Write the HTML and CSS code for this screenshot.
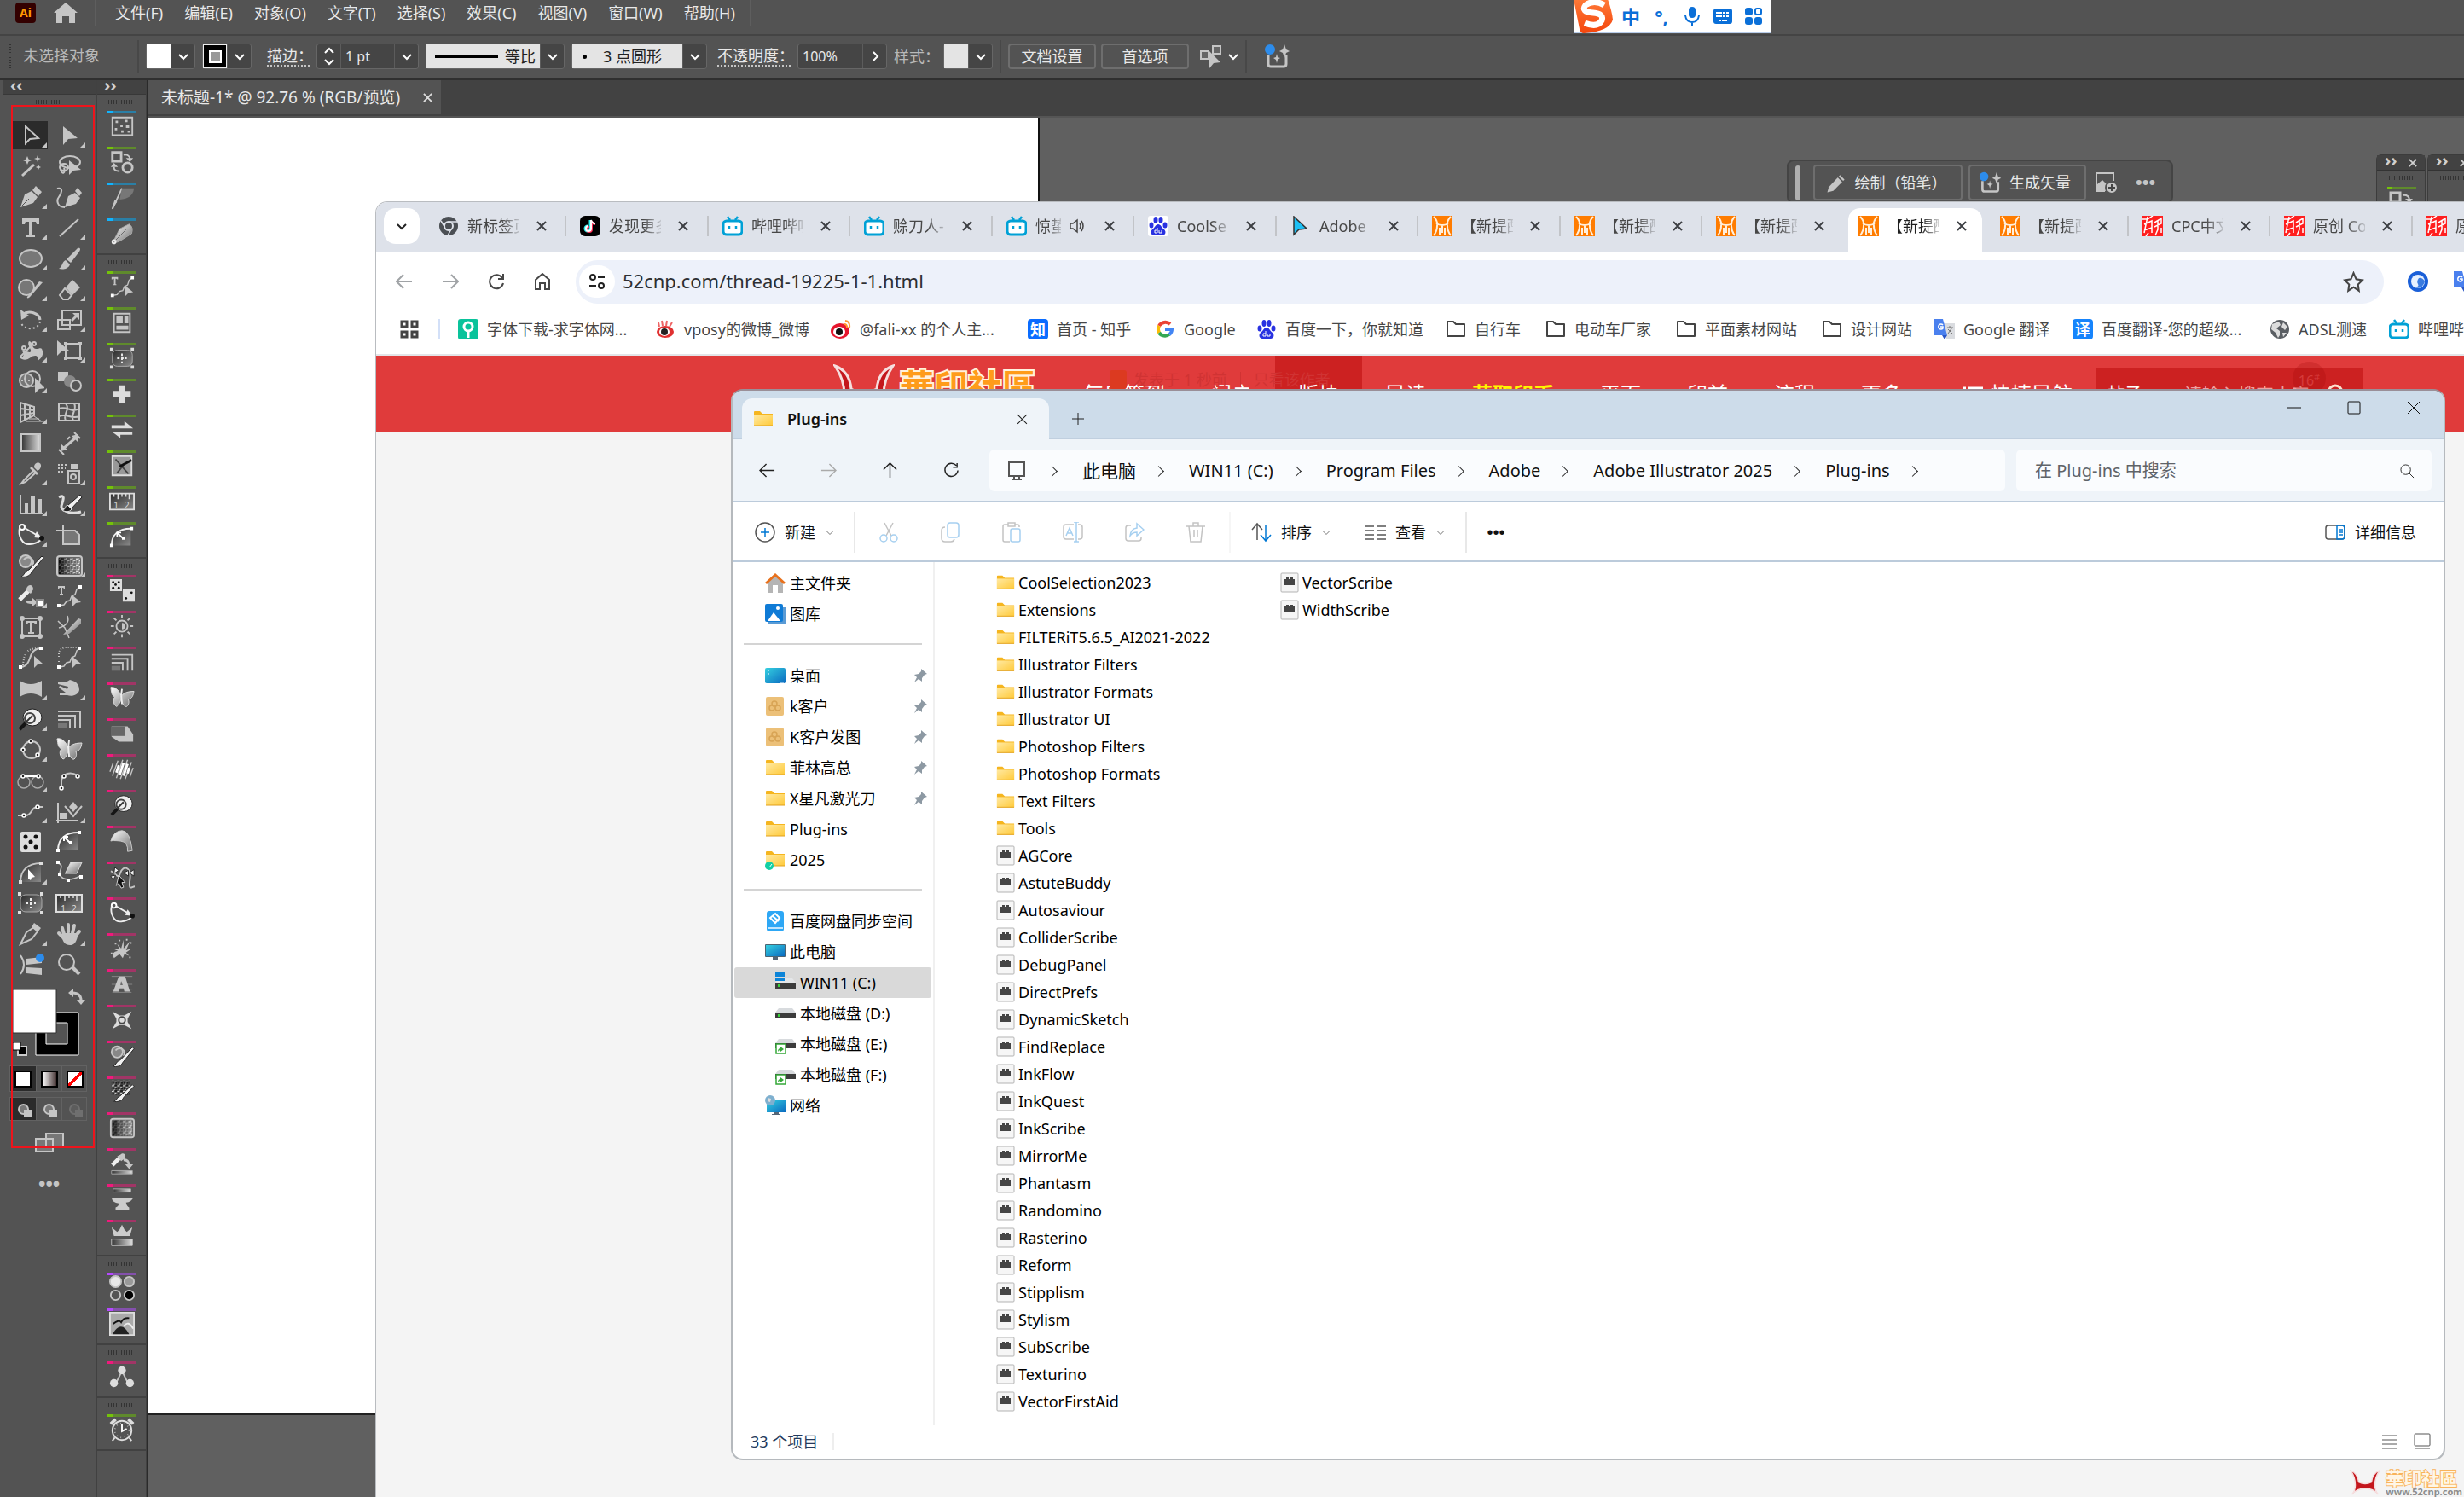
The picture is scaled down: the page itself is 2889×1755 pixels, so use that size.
FILE: index.html
```html
<!DOCTYPE html>
<html lang="zh-CN">
<head>
<meta charset="utf-8">
<title>未标题-1* @ 92.76 % (RGB/预览)</title>
<link rel="stylesheet" href="styles.css">
</head>
<body>
<svg class="defs" aria-hidden="true">
<defs>
<linearGradient id="lg"><stop offset="0" stop-color="#333"/><stop offset="1" stop-color="#ddd"/></linearGradient>
<linearGradient id="dg" x2="1" y2="1"><stop offset="0" stop-color="#2a2a2a"/><stop offset="1" stop-color="#8a8a8a"/></linearGradient>
<linearGradient id="sg" x2="1" y2="1"><stop offset="0" stop-color="#fff"/><stop offset="1" stop-color="#6a6a6a"/></linearGradient>
<linearGradient id="fy" x2="1" y2="1"><stop offset="0" stop-color="#ffe9a2"/><stop offset="1" stop-color="#ffca3a"/></linearGradient>
<linearGradient id="bl" x2="1" y2="1"><stop offset="0" stop-color="#35d0e0"/><stop offset="1" stop-color="#0a6ac0"/></linearGradient>
<linearGradient id="rb" x2="0" y2="1"><stop offset="0" stop-color="#ff7a38"/><stop offset="1" stop-color="#f4450c"/></linearGradient>
<linearGradient id="shade"><stop offset="0" stop-color="#000" stop-opacity=".75"/><stop offset="1" stop-color="#fff" stop-opacity=".4"/></linearGradient>
<pattern id="noise" width="7" height="7" patternUnits="userSpaceOnUse"><path d="M0 0h3v2H0zM4 3h2v3H4zM1 4h2v2H1z" fill="#1c1c1c"/><path d="M3 1h2v1H3zM6 6h1v1H6zM0 3h2v1H0zM5 0h1v2H5z" fill="#ddd"/></pattern>
</defs>
<symbol id="chev" viewBox="0 0 12 12"><path d="M1 4l5 5 5-5"/></symbol>
<symbol id="x" viewBox="0 0 12 12"><path d="M1 1l10 10M11 1L1 11"/></symbol>
<symbol id="sel" viewBox="0 0 32 32"><path d="M10 5v20l5-5 10-1z"/></symbol>
<symbol id="dsel" viewBox="0 0 32 32"><path class="f" d="M9 5v22l6-7 11-1z"/></symbol>
<symbol id="wand" viewBox="0 0 32 32"><path d="M6 27l14-13" stroke-width="3"/><path class="f" d="M12 4l1.500 3.500L17 9l-3.500 1.500L12 14l-1.500-3.500L7 9l3.500-1.500zM24 3l1 3 3 1-3 1-1 3-1-3-3-1 3-1zM25 14l1 2 2 1-2 1-1 2-1-2-2-1 2-1z"/></symbol>
<symbol id="lasso" viewBox="0 0 32 32"><ellipse cx="17" cy="11" rx="12" ry="7"/><ellipse cx="10" cy="17" rx="5" ry="4"/><path d="M6 20c2 6 6 4 4-2"/><path class="f" d="M16 9v17l5-5 9-1z"/></symbol>
<symbol id="pen" viewBox="0 0 32 32"><path class="f" d="M4 28l5-15 8-4 7 7-5 7zM18 8l4-5 7 7-4 5z"/><path d="M5 27l9-9" stroke="#535353" stroke-width="1"/></symbol>
<symbol id="curv" viewBox="0 0 32 32"><path class="f" d="M11 28l4-13 8-4 6 6-5 7zM23 9l3-4 5 6-3 4z"/><path d="M2 6c8-2 5 6 2 10s-2 12 7 12"/></symbol>
<symbol id="type" viewBox="0 0 32 32"><path class="f" d="M6 5h20v7h-3l-1-3h-4v15h3v3H11v-3h3V9h-4l-1 3H6z"/></symbol>
<symbol id="line" viewBox="0 0 32 32"><path d="M5 26L27 6"/></symbol>
<symbol id="ell" viewBox="0 0 32 32"><ellipse cx="16" cy="16" rx="13" ry="10" fill="#777"/></symbol>
<symbol id="brush" viewBox="0 0 32 32"><path class="f" d="M13 17L26 4c3-1 4 1 2 4L18 21zM12 18l5 5c-2 6-9 6-13 5 4-2 4-9 8-10z"/></symbol>
<symbol id="blob" viewBox="0 0 32 32"><ellipse cx="11" cy="14" rx="9" ry="9" fill="#777"/><path d="M30 8L16 24c-2 3-5 3-4 1l14-18z" class="f"/></symbol>
<symbol id="eraser" viewBox="0 0 32 32"><path class="f" d="M12 14L20 5l9 9-9 9z"/><path d="M11 15l8 8-4 5H9l-4-5z"/></symbol>
<symbol id="rot" viewBox="0 0 32 32"><path d="M6 10c8-6 20-2 21 6" stroke-width="3"/><path class="f" d="M4 4l1 12 9-5z"/><path d="M27 18c-2 10-18 11-22 2" stroke-dasharray="2 3"/></symbol>
<symbol id="scale" viewBox="0 0 32 32"><path d="M8 5h22v17H8zM3 16h14v11H3z"/><path class="f" d="M20 8h8v8l-3-3-5 5-2-2 5-5z"/></symbol>
<symbol id="warp" viewBox="0 0 32 32"><path class="f" d="M14 5c5 0 3 9 8 9s7-3 8 3-3 9-6 11c2-7-4-7-8-4S7 28 3 24c5 1 6-5 3-7 5-2 9 3 10 0s-5-8-2-12z"/><path d="M4 23L19 8"/><circle cx="8" cy="13" r="2"/><circle cx="20" cy="8" r="2"/></symbol>
<symbol id="ftrans" viewBox="0 0 32 32"><path d="M12 8h17v17H12z"/><path class="f" d="M2 4v18l5-5 9-1zM10 6h4v4h-4zM27 6h4v4h-4zM27 23h4v4h-4zM10 23h4v4h-4z"/></symbol>
<symbol id="shapeb" viewBox="0 0 32 32"><circle cx="11" cy="15" r="8" fill="#777"/><circle cx="18" cy="13" r="9"/><path d="M5 15h14" stroke-dasharray="2 2"/><path class="f" d="M21 12v18l5-5 7-1z"/></symbol>
<symbol id="blend" viewBox="0 0 32 32"><path class="f" d="M3 5h12v11H3z"/><circle cx="17" cy="16" r="7" fill="#888" stroke="none"/><ellipse cx="24" cy="21" rx="6" ry="6" fill="#555"/></symbol>
<symbol id="persp" viewBox="0 0 32 32"><path d="M4 5v23l16-8V10zM4 12l16 2M4 20l16-3M9 7v19M15 8v14"/><path d="M20 21l9 6M10 27h20M14 24h12" stroke-width="1"/></symbol>
<symbol id="mesh" viewBox="0 0 32 32"><path d="M4 6h24v20H4zM12 6c6 8-4 12 0 20M22 6c4 8-5 12-1 20M4 12c10-4 14 6 24 0M4 21c10-4 14 4 24 0"/></symbol>
<symbol id="grad" viewBox="0 0 32 32"><path d="M5 6h22v20H5z" fill="url(#lg)"/></symbol>
<symbol id="meas" viewBox="0 0 32 32"><path d="M9 23L24 10" stroke-width="3"/><path class="f" d="M6 26v-9l8 7zM27 6v10l-8-8z"/><path d="M4 24l6 6M22 4l7 7M14 12l3-3"/></symbol>
<symbol id="dropper" viewBox="0 0 32 32"><path d="M20 12L8 24l-3 4 5-2 12-11"/><path class="f" d="M17 8l8 8-2 2-8-8zM20 9c0-7 9-7 8-1-1 4-3 4-4 5z"/></symbol>
<symbol id="spray" viewBox="0 0 32 32"><path d="M15 13h13v15H15z"/><circle cx="21" cy="20" r="3"/><path class="f" d="M18 5h8v6h-8z"/><path d="M3 6h12M3 10h9M3 14h6" stroke-dasharray="2 2"/></symbol>
<symbol id="graph" viewBox="0 0 32 32"><path d="M4 5v22h26"/><path class="f" d="M9 15h4v11H9zM16 7h5v19h-5zM24 10h5v16h-5z"/></symbol>
<symbol id="inkb" viewBox="0 0 32 32"><path d="M4 8c9-5 4 6 3 10s8 11 23 7" stroke="#ddd" stroke-width="3"/><path d="M14 18L29 5l2 3-13 14z" fill="#f0f0f0" stroke="#222" stroke-width="1"/><path d="M14 17l5 5c-3 4-8 3-11 1 4 0 3-5 6-6z" fill="#222" stroke="#ddd" stroke-width="1"/></symbol>
<symbol id="scribe" viewBox="0 0 32 32"><circle cx="6" cy="7" r="3" stroke="#fff"/><path d="M3 8c-2 9 3 20 12 19s10-3 14-6" stroke="#eee" stroke-width="2"/><path d="M9 8l17 10" stroke="#eee"/><path d="M23 12l6 8-9-1z" fill="#eee" stroke="none"/><circle cx="29" cy="20" r="3" fill="#111" stroke="none"/></symbol>
<symbol id="artb" viewBox="0 0 32 32"><path d="M9 11h14l5 5v11H9z" fill="#777"/><path d="M9 4v6M1 11h7"/></symbol>
<symbol id="blobb" viewBox="0 0 32 32"><circle cx="10" cy="11" r="7" fill="#888"/><path d="M8 9a6 6 0 0 1 10 7"/><path d="M14 21L29 5l2 2-14 17c-2 5-9 6-12 5 4-2 4-7 9-8z" fill="#f0f0f0" stroke="#222" stroke-width="1"/></symbol>
<symbol id="tex" viewBox="0 0 32 32"><rect x="2" y="5" width="29" height="23" rx="3" fill="#666"/><path d="M4 7h25v19H4z" fill="url(#noise)" stroke="none"/><path d="M4 7h25v19H4z" fill="url(#shade)" stroke="none"/></symbol>
<symbol id="eyeap" viewBox="0 0 32 32"><path d="M3 20L15 8" stroke="#eee" stroke-width="5"/><path class="f" d="M11 7c2-6 8-5 8 1l-3 5-6-5zM10 21h8v-3l6 5-6 5v-3c-5 0-8-1-8-4z"/><path d="M23 20h8v8h-8z" fill="#fff" stroke="#888"/></symbol>
<symbol id="tpath" viewBox="0 0 32 32"><path d="M5 27l5-1 3-4 4-1 2-5 4-2 2-6 4-3" stroke-width="1.500"/><path d="M2 25h4v4H2zM27 3h4v4h-4z" fill="#fff" stroke="none"/><path class="f" d="M3 4h8v3h-1l-1-1H8v7h1v1H5v-1h1V6H5L4 7H3zM20 15v13l4-4 6-1z"/></symbol>
<symbol id="tframe" viewBox="0 0 32 32"><path d="M6 6h21v21H6z"/><path class="f" d="M10 9h13v4h-2l-1-2h-2v11h2v2h-7v-2h2V11h-2l-1 2h-2z"/><g class="f"><circle cx="6" cy="6" r="3"/><circle cx="27" cy="6" r="3"/><circle cx="6" cy="27" r="3"/><circle cx="27" cy="27" r="3"/></g></symbol>
<symbol id="knife" viewBox="0 0 32 32"><path d="M3 9l8 8 5 12M14 3c3 7-2 12-10 14" stroke-width="1.500"/><path d="M9 25L27 6l3 1v5L16 24z" fill="url(#sg)" stroke="none"/></symbol>
<symbol id="curve1" viewBox="0 0 32 32"><path d="M5 27c14-2 6-20 22-22"/><path d="M7 25C8 10 12 5 25 5" stroke-dasharray="1 2"/><path d="M2 25h4v4H2zM26 3h4v4h-4z" fill="#fff" stroke="none"/><path class="f" d="M20 14v14l4-4 6-1z"/></symbol>
<symbol id="curve2" viewBox="0 0 32 32"><path d="M5 27l5-1 3-4 4-1 2-5 4-2 2-6 4-3" stroke-width="1.500"/><path d="M4 24V12q0-7 8-8h14" stroke-dasharray="1 2"/><path d="M2 25h4v4H2zM26 3h4v4h-4z" fill="#fff" stroke="none"/><path class="f" d="M20 15v13l4-4 6-1z"/></symbol>
<symbol id="env" viewBox="0 0 32 32"><path class="f" d="M3 7q13 8 26 0v19q-13-8-26 0z"/></symbol>
<symbol id="handw" viewBox="0 0 32 32"><path class="f" d="M3 9h9l5-3c9 2 11 7 11 12-1 6-9 8-14 6l-9 0v-2l7-1-8-6 1-2 9 4 1-3-12-3z"/></symbol>
<symbol id="lens" viewBox="0 0 32 32"><path d="M11 20l-8 8" stroke="#151515" stroke-width="4"/><ellipse cx="18" cy="14" rx="11" ry="10" fill="#eee" stroke="#222" stroke-width="1"/><ellipse cx="15" cy="15" rx="6" ry="6" stroke="#444" stroke-width="2"/><path d="M10 20l8-8" stroke="#333"/></symbol>
<symbol id="corner" viewBox="0 0 32 32"><path d="M3 7h26v20M3 12h20v15M3 17h14v10"/><path d="M3 21h11v6H3z" fill="#777" stroke="none"/></symbol>
<symbol id="circn" viewBox="0 0 32 32"><circle cx="17" cy="16" r="10"/><g fill="#222" stroke="#fff" stroke-width="1.500"><circle cx="16" cy="6" r="2"/><circle cx="7" cy="16" r="2"/><circle cx="24" cy="22" r="2"/></g></symbol>
<symbol id="bfly" viewBox="0 0 32 32"><path d="M15 14C12 5 6 2 2 3c1 7 1 10 5 12-3 3-2 9 2 12 3-1 5-6 6-10 1 6 4 11 7 10 3-3 3-6 2-9 5-1 6-5 7-10-6 0-12 1-16 6z" fill="url(#sg)" stroke="#ddd" stroke-width="1"/><path d="M15 12l1 12M15 13l1-8" stroke="#eee"/></symbol>
<symbol id="twoc" viewBox="0 0 32 32"><g stroke="#aaa" stroke-width="1.500"><circle cx="8" cy="18" r="7"/><circle cx="24" cy="18" r="7"/></g><path d="M7 11h18" stroke="#fff"/><g fill="#222" stroke="#fff" stroke-width="1.500"><circle cx="7" cy="11" r="2"/><circle cx="25" cy="11" r="2"/></g></symbol>
<symbol id="arcn" viewBox="0 0 32 32"><path d="M7 25V18c0-12 12-12 19-8"/><g fill="#222" stroke="#fff" stroke-width="1.500"><circle cx="7" cy="25" r="2"/><circle cx="10" cy="11" r="2"/><circle cx="26" cy="11" r="2"/></g></symbol>
<symbol id="scurv" viewBox="0 0 32 32"><path d="M1 21h9c8 0 6-10 14-10h7"/><g fill="#222" stroke="#fff" stroke-width="1.500"><circle cx="8" cy="21" r="2"/><circle cx="24" cy="11" r="2"/></g></symbol>
<symbol id="shapes" viewBox="0 0 32 32"><path d="M3 6v24M1 27h26M11 10l10 12L31 10"/><path class="f" d="M5 18h8v7H5zM21 5l5 6-5 6-5-6z"/></symbol>
<symbol id="dice" viewBox="0 0 32 32"><rect x="4" y="4" width="24" height="24" rx="2" fill="#ddd" stroke="none"/><g fill="#111" stroke="none"><circle cx="10" cy="10" r="2.500"/><circle cx="22" cy="10" r="2.500"/><circle cx="16" cy="16" r="2.500"/><circle cx="10" cy="22" r="2.500"/><circle cx="22" cy="22" r="2.500"/></g></symbol>
<symbol id="dync" viewBox="0 0 32 32"><path d="M3 26C3 12 12 5 27 5v21z" fill="url(#dg)" stroke="none"/><path d="M3 26C3 12 12 5 27 5" stroke="#eee"/><path d="M1 24h4v4H1zM26 3h4v4h-4zM16 15h4v4h-4z" fill="#fff" stroke="none"/><path d="M11 11l6 6M10 15v-5h5" stroke="#fff"/></symbol>
<symbol id="dyns" viewBox="0 0 32 32"><path d="M4 27C4 13 13 5 28 5v22z" fill="url(#dg)" stroke="none"/><path d="M4 27C4 13 13 5 28 5"/><path d="M2 25h4v4H2zM26 3h4v4h-4z" fill="#ddd" stroke="none"/><path d="M13 12l8 9-4 1-1 3-3-2z" fill="#fff" stroke="none"/></symbol>
<symbol id="erp" viewBox="0 0 32 32"><path d="M12 16l6-12h13l-6 13H11z" fill="url(#sg)" stroke="#ddd" stroke-width="1"/><path d="M3 5c8 2 1 9 2 13s9 10 24 2" stroke-width="1.500"/><path d="M1 2h4v4H1zM3 16h4v4H3zM13 23h4v4h-4zM28 19h4v4h-4z" fill="#fff" stroke="none"/></symbol>
<symbol id="rr" viewBox="0 0 32 32"><rect x="4" y="6" width="25" height="20" rx="6" fill="url(#dg)" stroke="#aaa" stroke-width="1"/><path d="M1 3h4v4H1zM27 3h4v4h-4zM1 25h4v4H1zM27 25h4v4h-4z" fill="#ddd" stroke="none"/><path d="M16 10v12M10 16h12" stroke="#eee" stroke-dasharray="3 2"/></symbol>
<symbol id="ruler" viewBox="0 0 32 32"><path d="M1 6h30v20H1z" fill="url(#dg)" stroke="#ddd"/><path d="M6 6v4M11 6v7M16 6v4M21 6v4M25 6v7" stroke="#ddd" stroke-width="1.500"/></symbol>
<symbol id="slice" viewBox="0 0 32 32"><path d="M4 28l7-14 9-6 4 5-7 9z"/><path class="f" d="M20 3l8 6-4 5-7-6z"/></symbol>
<symbol id="hand" viewBox="0 0 32 32"><path d="M10 16L8 9M15 14V5M20 15l2-9M24 18l4-5M10 21l-6-6" stroke-width="4" stroke-linecap="round"/><path class="f" d="M8 15h16l2 4c-2 8-5 10-9 10-6 0-8-4-9-8z"/></symbol>
<symbol id="refl" viewBox="0 0 32 32"><path d="M4 5q8 11 0 22"/><path class="f" d="M11 9l18-2v7l-18 2zM11 19l18 1v8l-18-2z"/><circle cx="27" cy="8" r="5" fill="#2d8ceb" stroke="none"/></symbol>
<symbol id="mag" viewBox="0 0 32 32"><circle cx="13" cy="13" r="9"/><path d="M20 19l8 8" stroke-width="4"/></symbol>
<symbol id="dots5" viewBox="0 0 32 32"><path d="M4 5h25v22H4z"/><path class="f" d="M8 9h3v3H8zM20 8h3v3h-3zM14 14h3v3h-3zM7 18h3v3H7zM21 15h4v3h-4zM15 21h3v3h-3zM23 22h3v2h-3z"/></symbol>
<symbol id="swapsh" viewBox="0 0 32 32"><path d="M4 4h11v11H4z" stroke-width="3"/><circle cx="23" cy="23" r="6" stroke-width="3"/><path d="M18 7q7-1 8 5M13 27q-7 1-7-5"/><path class="f" d="M21 11h9l-4 5zM2 22l4-5 5 5z"/></symbol>
<symbol id="quill" viewBox="0 0 32 32"><path d="M4 30L16 4" /><path d="M16 4h15q-1 13-18 14z" fill="#777" stroke="none"/><path class="f" d="M3 30l4-12 3 3z"/></symbol>
<symbol id="nib" viewBox="0 0 32 32"><path d="M4 28L13 10 25 4q6 4 3 12L12 26z" fill="url(#sg)" stroke="#aaa" stroke-width="1"/><path d="M6 26L21 11" stroke="#666" stroke-width="1"/><circle cx="6" cy="26" r="2" stroke="#eee"/></symbol>
<symbol id="news" viewBox="0 0 32 32"><path d="M6 5h20v23H6z"/><path class="f" d="M9 8h8v9H9zM19 8h5v9h-5zM9 20h15v5H9z"/></symbol>
<symbol id="plus" viewBox="0 0 32 32"><path d="M12 5h8v7h7v8h-7v7h-8v-7H5v-8h7z" fill="#ddd" stroke="none"/></symbol>
<symbol id="lr" viewBox="0 0 32 32"><path d="M3 10h16V5l11 9H3zM29 18H3l11 8v-4h15z" fill="#ddd" stroke="none"/></symbol>
<symbol id="cross" viewBox="0 0 32 32"><path d="M4 4h24v24H4z" fill="#999" stroke="#ddd"/><path d="M8 8l16 18M10 25l8-10" stroke="#444"/><path d="M13 17l15-8" stroke="#111" stroke-width="3"/></symbol>
<symbol id="dice2" viewBox="0 0 32 32"><path d="M1 2h15v15H1zM17 15h15v15H17z" fill="#ddd" stroke="none"/><g fill="#111" stroke="none"><circle cx="5" cy="6" r="1.500"/><circle cx="12" cy="6" r="1.500"/><circle cx="8" cy="9" r="1.500"/><circle cx="5" cy="13" r="1.500"/><circle cx="12" cy="13" r="1.500"/><circle cx="28" cy="19" r="1.500"/><circle cx="21" cy="26" r="1.500"/></g></symbol>
<symbol id="sun" viewBox="0 0 32 32"><circle cx="16" cy="16" r="7"/><path class="f" d="M16 12a4 4 0 0 1 0 8z"/><path d="M16 2v4M16 26v4M2 16h4M26 16h4M6 6l3 3M23 23l3 3M26 6l-3 3M9 23l-3 3"/></symbol>
<symbol id="box3" viewBox="0 0 32 32"><path class="f" d="M3 7h20l7 10v9H12L3 20z"/><path d="M3 7h17v12H3z" fill="#666" stroke="none"/></symbol>
<symbol id="diag" viewBox="0 0 32 32"><path d="M1 19l4-11M4 24l7-19M9 27l8-23M14 28l9-24M20 28l8-21M26 25l4-11" stroke-width="1.500"/><path d="M9 20l3-9M13 23l5-15M18 24l5-15M23 21l2-7" stroke="#fff" stroke-width="3"/></symbol>
<symbol id="banana" viewBox="0 0 32 32"><path d="M2 16Q6 3 16 3t13 25l-6 1q1-12-9-13T2 16z" fill="url(#sg)" stroke="#ccc" stroke-width="1"/></symbol>
<symbol id="wnode" viewBox="0 0 32 32"><path d="M2 9c6 1 9 12 12 2s14-8 12 8 2 9 6 9"/><path d="M7 4l5 4-6 4zM2 15l6-1-3 6zM18 11l6-3v7zM31 7v8l-6-4z" fill="#eee" stroke="#222" stroke-width="1"/><path d="M12 14l8 9-4 0 2 6-3 1-3-6-3 3z" fill="#111" stroke="#ddd" stroke-width="1"/></symbol>
<symbol id="splat" viewBox="0 0 32 32"><path class="f" d="M6 28q-4-8 5-9l-7-3 9 1-3-7 5 6 3-11 0 11 8-9-5 11 7-2-7 5 4 4-6-2-2 5-4-5z"/><path d="M8 9v2M22 4v2M27 8v2M3 21v2M26 26v2M13 5v2"/></symbol>
<symbol id="abig" viewBox="0 0 32 32"><path d="M3 6h26M3 16h26M3 22h26M4 26h24" stroke="#888" stroke-width="1"/><path class="f" d="M12 6h8l6 19h-7l-1-4h-5l-1 4H5zm3 6l-1 5h3z"/></symbol>
<symbol id="star4" viewBox="0 0 32 32"><path d="M4 5l9 5h6l9-5-5 9v4l5 9-9-5h-6l-9 5 5-9v-4z" fill="#ddd" stroke="none"/><circle cx="16" cy="16" r="4" stroke="#444"/></symbol>
<symbol id="texb" viewBox="0 0 32 32"><path d="M3 2h23v18H3z" fill="url(#noise)" stroke="none"/><path d="M14 21L29 7l2 2-13 14c-2 5-9 6-12 5 4-2 4-6 8-7z" fill="#f0f0f0" stroke="#222" stroke-width="1"/></symbol>
<symbol id="eyeg" viewBox="0 0 32 32"><path d="M4 18L15 7" stroke="#eee" stroke-width="5"/><path class="f" d="M14 5c4-4 8 0 5 5l-4 3-5-6zM18 10q7-1 8 7h4l-5 6-5-6h3q0-4-5-4z"/><path d="M3 25h26v4H3z" fill="url(#lg)" stroke="#aaa" stroke-width="1"/></symbol>
<symbol id="anvil" viewBox="0 0 32 32"><path d="M5 3h22v4H5z" fill="url(#lg)" stroke="#aaa" stroke-width="1"/><path d="M3 14h27q-2 5-9 6 1 5 4 6v3H8v-3q4-1 4-5-8-1-9-7z" fill="#ccc" stroke="none"/></symbol>
<symbol id="crown" viewBox="0 0 32 32"><path d="M6 17L3 6l7 6 3-3 3-6 3 6 3 3 7-6-3 11z" fill="#ccc" stroke="none"/><path d="M3 21h26v8H3z" fill="url(#lg)" stroke="#ccc" stroke-width="1"/></symbol>
<symbol id="four" viewBox="0 0 32 32"><circle cx="8" cy="8" r="7" fill="#e8e8e8"/><circle cx="25" cy="8" r="6" fill="#999"/><circle cx="8" cy="25" r="6"/><circle cx="25" cy="25" r="6" fill="#000"/></symbol>
<symbol id="bird" viewBox="0 0 32 32"><path d="M1 2h30v28H1z" fill="#aaa" stroke="#ddd"/><path d="M5 16q7-6 10-2 3-6 10-5" stroke="#111"/><path d="M4 29q11-19 21 0z" fill="#222" stroke="none"/><path d="M18 19q6-8 12 3" stroke="#eee"/></symbol>
<symbol id="nodes" viewBox="0 0 32 32"><path d="M8 25l8-16 8 16"/><g fill="#ddd" stroke="none"><circle cx="16" cy="8" r="5"/><circle cx="6" cy="24" r="5"/><circle cx="26" cy="24" r="5"/></g></symbol>
<symbol id="clock" viewBox="0 0 32 32"><ellipse cx="16" cy="17" rx="12" ry="12" stroke="#ddd"/><path d="M16 9v9l6-3" stroke="#fff"/><path d="M2 9l6-6M30 9l-6-6" stroke="#ddd" stroke-width="4"/><path d="M7 26l-3 4M25 26l3 4" stroke="#ddd"/><circle cx="16" cy="17" r="9" stroke="#aaa" stroke-dasharray="1 4"/></symbol>
<symbol id="pencil" viewBox="0 0 32 32"><path class="f" d="M6 22L21 6l6 6-15 15-8 2z"/><path d="M18 8l7 7" stroke="#535353"/></symbol>
<symbol id="gen" viewBox="0 0 32 32"><path d="M5 14v11q0 3 3 3h15q3 0 3-3V15" stroke-width="3"/><path class="f" d="M24 2l2 6 4 2-4 2-2 6-2-6-4-2 4-2zM15 13l1 4 3 1-3 2-1 4-1-4-3-2 3-1z"/><circle cx="7" cy="8" r="6" fill="#2d8ceb" stroke="none"/></symbol>
<symbol id="imgadd" viewBox="0 0 32 32"><path d="M15 26H5V5h20v9"/><path class="f" d="M6 25v-7l6-5 5 5v8z"/><circle cx="23" cy="22" r="7" fill="#c5c5c5" stroke="#535353"/><path d="M23 18v8M19 22h8" stroke="#444"/></symbol>
<symbol id="align" viewBox="0 0 32 32"><path d="M18 4h9v9h-9zM4 10h9v9H4z" fill="#666"/><path class="f" d="M14 10v20l5-6 8-1z"/></symbol>

<symbol id="chrome" viewBox="0 0 24 24"><circle cx="12" cy="12" r="11" fill="#4b4f54"/><path d="M12 7h10M8 14L3 6M16 14l-5 9" stroke="#dee2ea" stroke-width="1.500"/><circle cx="12" cy="12" r="5" fill="#4b4f54" stroke="#dee2ea" stroke-width="2"/></symbol>
<symbol id="tiktok" viewBox="0 0 24 24"><rect width="24" height="24" rx="6" fill="#000"/><path d="M12 5v10a3 3 0 1 1-3-3M12 5q1 4 5 4" fill="none" stroke="#2cf0ee" stroke-width="3"/><path d="M14 6v10a3 3 0 1 1-3-3M14 6q1 4 4 4" fill="none" stroke="#fe2c55" stroke-width="2"/><path d="M13 5v10a3 3 0 1 1-3-3M13 5q1 4 5 4" fill="none" stroke="#fff" stroke-width="2"/></symbol>
<symbol id="bili" viewBox="0 0 24 24"><rect x="1" y="6" width="22" height="16" rx="4" fill="#fff" stroke="#00a1d6" stroke-width="3"/><path d="M6 1l3 4M18 1l-3 4M8 12v3M16 12v3" stroke="#00a1d6" stroke-width="2.500"/></symbol>
<symbol id="baidu" viewBox="0 0 24 24"><g fill="#2932e1"><ellipse cx="4" cy="11" rx="2.500" ry="3.500"/><ellipse cx="9" cy="5" rx="2.500" ry="4"/><ellipse cx="15" cy="5" rx="2.500" ry="4"/><ellipse cx="20" cy="11" rx="2.500" ry="3.500"/><path d="M12 10c3 0 4 4 7 6 3 3 1 7-2 7H7c-3 0-5-4-2-7 3-2 4-6 7-6z"/></g><path d="M11 14v6H8v-3h3M13 17v3h3v-3" fill="none" stroke="#fff"/></symbol>
<symbol id="cursor" viewBox="0 0 24 24"><path d="M4 1v21l6-6 9-1z" fill="#1cc0f5" stroke="#333" stroke-width="1.500"/></symbol>
<symbol id="hua" viewBox="0 0 24 24"><path d="M0 0h24v24H0z" fill="#ff7c00"/><path d="M2 1q5 5 4 11 0 6-4 11M22 1q-5 5-4 11 0 6 4 11M5 9q7 4 14 0M9 14v9M15 14v9M12 11v9" fill="none" stroke="#ffefdc" stroke-width="2"/></symbol>
<symbol id="cpc" viewBox="0 0 24 24"><path d="M0 0h24v24H0z" fill="#ff1f1f"/><path d="M0 4h6l6-4M2 10l9-4v14M2 17l9-3M6 1L2 20M14 8l8-5v6l-8 4M18 5v11l-3 7M22 14v6M4 24l3-4" fill="none" stroke="#fff" stroke-width="1.500"/></symbol>
<symbol id="fontd" viewBox="0 0 24 24"><rect width="24" height="24" rx="3" fill="#0ac39b"/><circle cx="12" cy="9" r="5" fill="none" stroke="#fff" stroke-width="3"/><path d="M12 13v9" stroke="#fff" stroke-width="3"/></symbol>
<symbol id="weibo" viewBox="0 0 24 24"><ellipse cx="11" cy="14" rx="11" ry="9" fill="#e6162d"/><ellipse cx="10" cy="15" rx="7" ry="6" fill="#fff"/><circle cx="10" cy="15" r="4" fill="#111"/><path d="M17 2q6 1 5 8M16 6q3 0 3 4" fill="none" stroke="#ff9933" stroke-width="2"/></symbol>
<symbol id="vposy" viewBox="0 0 24 24"><ellipse cx="12" cy="15" rx="10" ry="7" fill="#e03030"/><ellipse cx="11" cy="15" rx="6" ry="5" fill="#fff"/><circle cx="11" cy="15" r="4" fill="#222"/><path d="M5 9L4 4M9 8L8 2M13 8l1-6M17 9l3-5" stroke="#e66" stroke-width="2"/></symbol>
<symbol id="google" viewBox="0 0 24 24"><g fill="none" stroke-width="4"><path d="M18 6a8.500 8.500 0 0 0-13 2" stroke="#ea4335"/><path d="M5 8a8.500 8.500 0 0 0 0 8" stroke="#fbbc05"/><path d="M5 16a8.500 8.500 0 0 0 12 2" stroke="#34a853"/><path d="M17 18q3-2 3-6h-8" stroke="#4285f4"/></g></symbol>
<symbol id="bfold" viewBox="0 0 24 24"><path d="M2 3h7l3 3h10v14H2z" fill="none" stroke="#444" stroke-width="2" stroke-linejoin="round"/></symbol>
<symbol id="gtr" viewBox="0 0 24 24"><path d="M10 5h14v18H14z" fill="#dadce0"/><path d="M0 0h10l5 19H0z" fill="#4a80ee"/><path d="M9 19h6l-3 5z" fill="#2a56c6"/><path d="M10 7a3 3 0 1 0 0 4V9H7" fill="none" stroke="#fff" stroke-width="1.500"/><path d="M15 10h7M18 8v2M16 17l5-7M16 12l5 5" stroke="#777"/></symbol>
<symbol id="globe" viewBox="0 0 24 24"><circle cx="12" cy="12" r="11" fill="#5a5e63"/><path d="M3 6l8-3 2 4-5 4 4 3v5l-2 3-3-6-5-4z" fill="#ddd"/><path d="M16 4l5 5-3 4-4-4zM15 16l5 0-4 5z" fill="#ddd"/></symbol>
<symbol id="spk" viewBox="0 0 18 18"><path d="M2 6h3l5-4v14l-5-4H2zM13 6q2 3 0 6M15 3q4 6 0 12" fill="none" stroke="#444" stroke-width="1.500"/></symbol>

<symbol id="fold" viewBox="0 0 24 20"><path d="M1 2q0-1 1-1h6l3 3h12v14H1z" fill="#f5b51f"/><path d="M1 5h22v13H1z" fill="url(#fy)"/><path d="M1 18h22" stroke="#e0a01c"/></symbol>
<symbol id="plug" viewBox="0 0 22 24"><rect x="1" y="1" width="20" height="22" rx="1" fill="#f6f6f6" stroke="#b3b3b3"/><path d="M5 8h2V6h3v2h2V6h3v2h2v7H5z" fill="#454545"/></symbol>
<symbol id="home" viewBox="0 0 24 24"><path d="M3 11l9-8 9 8v12h-6v-9H9v9H3z" fill="#b5b5b5"/><path d="M1 12L12 2l11 10" fill="none" stroke="#e8711c" stroke-width="3"/></symbol>
<symbol id="pics" viewBox="0 0 24 24"><path d="M4 4h20v20H4z" fill="#5a9bd5"/><rect width="21" height="21" rx="2" fill="#0f7bd6"/><path d="M3 20l7-10 8 10z" fill="#fff"/><circle cx="15" cy="5" r="2" fill="#fff"/></symbol>
<symbol id="desk" viewBox="0 0 24 24"><rect y="3" width="24" height="18" rx="2" fill="url(#bl)"/><path d="M3 6h2M3 10h2M17 20h5" stroke="#fff"/></symbol>
<symbol id="zip" viewBox="0 0 24 24"><rect x="1" y="1" width="21" height="22" rx="2" fill="#ecc078"/><g fill="none" stroke="#d8a455" stroke-width="1.500"><circle cx="11" cy="9" r="3"/><circle cx="8" cy="14" r="3"/><circle cx="15" cy="14" r="3"/></g></symbol>
<symbol id="pan" viewBox="0 0 24 24"><rect x="2" width="20" height="24" rx="3" fill="#2da7f5"/><path d="M3 19h18v2H3z" fill="#bfe5ff"/><path d="M12 3l5 5-5 6-6-6zM9 6l7 6" fill="none" stroke="#fff" stroke-width="2"/></symbol>
<symbol id="pc" viewBox="0 0 24 24"><rect y="3" width="24" height="15" rx="1" fill="#4c6473"/><path d="M1 4h22v13H1z" fill="url(#bl)"/><path d="M9 18h6v3H9zM7 21h10v1H7z" fill="#567"/></symbol>
<symbol id="disk" viewBox="0 0 24 24"><path d="M4 6h16l4 5H0z" fill="#d8dbde"/><path d="M0 11h24v7H0z" fill="#3c3c3c"/><path d="M3 13h3v3H3z" fill="#3bd23b"/></symbol>
<symbol id="diskw" viewBox="0 0 24 24"><path d="M4 7h16l4 5H0z" fill="#e4e6e8"/><path d="M0 12h24v7H0z" fill="#3c3c3c"/><path d="M3 14h3v3H3z" fill="#3bd23b"/><path d="M0 0h5v5H0zM6 0h5v5H6zM0 6h5v4H0zM6 6h5v4H6z" fill="#0b84d8"/></symbol>
<symbol id="diske" viewBox="0 0 24 24"><path d="M4 6h16l4 5H0z" fill="#d8dbde"/><path d="M0 11h24v6H0z" fill="#3c3c3c"/><path d="M1 12h11v11H1z" fill="#fff" stroke="#35a838" stroke-width="1.500"/><path d="M3 21q0-4 3-4v-2l4 3-4 3v-2q-2 0-3 2z" fill="#35a838"/></symbol>
<symbol id="net" viewBox="0 0 24 24"><rect x="2" y="6" width="22" height="14" fill="url(#bl)"/><path d="M10 20h6v2h-6zM8 22h10v1H8z" fill="#567"/><circle cx="6" cy="6" r="6" fill="#7fb0cf"/><path d="M3 3l4 1-1 4-3-1z" fill="#ddd"/></symbol>
<symbol id="pin" viewBox="0 0 18 18"><path d="M10 1l7 6-3 1-3 4v4l-4-3-5 4 3-6-3-3 5-1 3-3z" fill="#8d99a3"/></symbol>
<symbol id="horn" viewBox="0 0 72 60"><path d="M2 2q17 6 19 27 15 8 30 0Q53 8 70 2 59 18 59 36q0 14 8 22-12-14-31-14T5 58q8-8 8-22Q13 18 2 2z" fill="#c4161c" stroke="#f6dede" stroke-width="3"/></symbol>
</svg>

<div class="ai">
  <header class="menubar">
    <span class="ailogo">Ai</span>
    <svg class="homeic" viewBox="0 0 28 24"><path d="M14 0l14 12h-3v12h-7v-8h-8v8H3V12H0z"/></svg>
    <nav class="menus"><a href="#">文件(F)</a><a href="#">编辑(E)</a><a href="#">对象(O)</a><a href="#">文字(T)</a><a href="#">选择(S)</a><a href="#">效果(C)</a><a href="#">视图(V)</a><a href="#">窗口(W)</a><a href="#">帮助(H)</a></nav>
  </header>
  <section class="control">
    <span class="grip-v"></span>
    <span class="nosel">未选择对象</span>
    <div class="combo"><button class="sw white" aria-label="填色"></button><button class="dd" aria-label="填色选项"><svg><use href="#chev"/></svg></button></div>
    <div class="combo"><button class="sw ring" aria-label="描边色"></button><button class="dd" aria-label="描边选项"><svg><use href="#chev"/></svg></button></div>
    <label class="dotted" for="sw">描边：</label>
    <div class="combo"><button class="spin" aria-label="增减"><svg viewBox="0 0 12 24"><path d="M1 8l5-5 5 5M1 16l5 5 5-5"/></svg></button><input id="sw" class="num w-pt" value="1 pt"><button class="dd" aria-label="粗细"><svg><use href="#chev"/></svg></button></div>
    <div class="combo pick"><i class="strokeline"></i><select class="s-prof" aria-label="宽度配置文件"><option>等比</option></select><span class="dd"><svg><use href="#chev"/></svg></span></div>
    <div class="combo pick"><i class="dot"></i><select class="s-brush" aria-label="画笔定义"><option>3 点圆形</option></select><span class="dd"><svg><use href="#chev"/></svg></span></div>
    <label class="dotted wide" for="op">不透明度：</label>
    <div class="combo"><input id="op" class="num w-op" value="100%"><button class="dd turn" aria-label="不透明度选项"><svg><use href="#chev"/></svg></button></div>
    <span class="style-l">样式：</span>
    <div class="combo"><button class="sw pale" aria-label="样式"></button><button class="dd" aria-label="样式选项"><svg><use href="#chev"/></svg></button></div>
    <span class="vline"></span>
    <button class="btn">文档设置</button>
    <button class="btn">首选项</button>
    <button class="plain" aria-label="选择类似的对象"><svg class="ti"><use href="#align"/></svg><svg class="c12"><use href="#chev"/></svg></button>
    <span class="vline"></span>
    <button class="plain gen" aria-label="生成"><svg class="ti"><use href="#gen"/></svg></button>
  </section>
  <div class="work">
    <aside class="tools">
      <div class="phead">‹‹</div>
      <div class="grip"></div>
      <div class="toolgrid">
        <button class="tool more on" aria-label="选择"><svg class="ti"><use href="#sel"/></svg></button><button class="tool more" aria-label="直接选择"><svg class="ti"><use href="#dsel"/></svg></button>
        <button class="tool" aria-label="魔棒"><svg class="ti"><use href="#wand"/></svg></button><button class="tool" aria-label="套索"><svg class="ti"><use href="#lasso"/></svg></button>
        <button class="tool more" aria-label="钢笔"><svg class="ti"><use href="#pen"/></svg></button><button class="tool" aria-label="曲率"><svg class="ti"><use href="#curv"/></svg></button>
        <button class="tool more" aria-label="文字"><svg class="ti"><use href="#type"/></svg></button><button class="tool more" aria-label="直线段"><svg class="ti"><use href="#line"/></svg></button>
        <button class="tool more" aria-label="椭圆"><svg class="ti"><use href="#ell"/></svg></button><button class="tool more" aria-label="画笔"><svg class="ti"><use href="#brush"/></svg></button>
        <button class="tool more" aria-label="Shaper"><svg class="ti"><use href="#blob"/></svg></button><button class="tool more" aria-label="橡皮擦"><svg class="ti"><use href="#eraser"/></svg></button>
        <button class="tool more" aria-label="旋转"><svg class="ti"><use href="#rot"/></svg></button><button class="tool more" aria-label="比例缩放"><svg class="ti"><use href="#scale"/></svg></button>
        <button class="tool more" aria-label="宽度"><svg class="ti"><use href="#warp"/></svg></button><button class="tool more" aria-label="自由变换"><svg class="ti"><use href="#ftrans"/></svg></button>
        <button class="tool more" aria-label="形状生成器"><svg class="ti"><use href="#shapeb"/></svg></button><button class="tool" aria-label="混合"><svg class="ti"><use href="#blend"/></svg></button>
        <button class="tool more" aria-label="透视网格"><svg class="ti"><use href="#persp"/></svg></button><button class="tool" aria-label="网格"><svg class="ti"><use href="#mesh"/></svg></button>
        <button class="tool" aria-label="渐变"><svg class="ti"><use href="#grad"/></svg></button><button class="tool" aria-label="尺寸"><svg class="ti"><use href="#meas"/></svg></button>
        <button class="tool more" aria-label="吸管"><svg class="ti"><use href="#dropper"/></svg></button><button class="tool more" aria-label="符号喷枪"><svg class="ti"><use href="#spray"/></svg></button>
        <button class="tool more" aria-label="图表"><svg class="ti"><use href="#graph"/></svg></button><button class="tool more" aria-label="墨迹画笔"><svg class="ti"><use href="#inkb"/></svg></button>
        <button class="tool more" aria-label="PathScribe"><svg class="ti"><use href="#scribe"/></svg></button><button class="tool" aria-label="画板"><svg class="ti"><use href="#artb"/></svg></button>
        <button class="tool" aria-label="斑点画笔"><svg class="ti"><use href="#blobb"/></svg></button><button class="tool more" aria-label="纹理"><svg class="ti"><use href="#tex"/></svg></button>
        <button class="tool more" aria-label="取样"><svg class="ti"><use href="#eyeap"/></svg></button><button class="tool" aria-label="路径文字"><svg class="ti"><use href="#tpath"/></svg></button>
        <button class="tool" aria-label="文字框"><svg class="ti"><use href="#tframe"/></svg></button><button class="tool" aria-label="刻刀"><svg class="ti"><use href="#knife"/></svg></button>
        <button class="tool" aria-label="平滑"><svg class="ti"><use href="#curve1"/></svg></button><button class="tool" aria-label="简化"><svg class="ti"><use href="#curve2"/></svg></button>
        <button class="tool more" aria-label="封套"><svg class="ti"><use href="#env"/></svg></button><button class="tool more" aria-label="变形"><svg class="ti"><use href="#handw"/></svg></button>
        <button class="tool more" aria-label="透镜"><svg class="ti"><use href="#lens"/></svg></button><button class="tool" aria-label="偏移"><svg class="ti"><use href="#corner"/></svg></button>
        <button class="tool more" aria-label="圆"><svg class="ti"><use href="#circn"/></svg></button><button class="tool" aria-label="镜像"><svg class="ti"><use href="#bfly"/></svg></button>
        <button class="tool more" aria-label="切线"><svg class="ti"><use href="#twoc"/></svg></button><button class="tool" aria-label="弧"><svg class="ti"><use href="#arcn"/></svg></button>
        <button class="tool more" aria-label="曲线"><svg class="ti"><use href="#scurv"/></svg></button><button class="tool more" aria-label="吸附"><svg class="ti"><use href="#shapes"/></svg></button>
        <button class="tool" aria-label="随机"><svg class="ti"><use href="#dice"/></svg></button><button class="tool" aria-label="动态圆角"><svg class="ti"><use href="#dync"/></svg></button>
        <button class="tool more" aria-label="动态形状"><svg class="ti"><use href="#dyns"/></svg></button><button class="tool" aria-label="路径擦除"><svg class="ti"><use href="#erp"/></svg></button>
        <button class="tool" aria-label="圆角矩形"><svg class="ti"><use href="#rr"/></svg></button><button class="tool" aria-label="标尺"><svg class="ti"><use href="#ruler"/></svg><span class="nums"><b>1</b><b>2</b></span></button>
        <button class="tool more" aria-label="切片"><svg class="ti"><use href="#slice"/></svg></button><button class="tool more" aria-label="抓手"><svg class="ti"><use href="#hand"/></svg></button>
        <button class="tool" aria-label="重复"><svg class="ti"><use href="#refl"/></svg></button><button class="tool" aria-label="缩放"><svg class="ti"><use href="#mag"/></svg></button>
      </div>
      <svg class="colors" viewBox="0 0 96 86"><path d="M27 28h50v50H27z" fill="#000" stroke="#fff"/><path d="M39 40h25v25H39z" fill="#535353" stroke="#fff"/><path d="M0 1h51v51H0z" fill="#fff" stroke="#333"/><path d="M70 5q10 0 10 9" fill="none" stroke="#c5c5c5" stroke-width="3"/><path d="M65 5l6-5v10zM75 13h10l-5 6z" fill="#c5c5c5"/><path d="M6 68h10v10H6z" stroke="#ccc" stroke-width="2"/><path d="M0 63h9v9H0z" fill="#fff" stroke="#000"/></svg>
      <div class="modes"><button class="on" aria-label="颜色"><i class="chip"></i></button><button aria-label="渐变"><i class="chip g"></i></button><button aria-label="无"><i class="chip n"></i></button></div>
      <div class="modes low"><button class="on" aria-label="正常绘图"><i class="drawm"></i></button><button aria-label="背面绘图"><i class="drawm"></i></button><button aria-label="内部绘图"><i class="drawm off"></i></button></div>
      <svg class="screen" viewBox="0 0 34 24"><path d="M1 7h20v15H1zM13 1h20v16H13z" fill="#777" stroke="#c5c5c5" stroke-width="2"/></svg>
      <div class="tdots">•••</div>
      <div class="mark"></div>
    </aside>
    <aside class="plugs">
      <div class="phead">››</div>
      <div class="pgroup blue"><div class="grip"></div><button aria-label="面板 1"><svg class="ti"><use href="#dots5"/></svg></button><button class="green" aria-label="面板 2"><svg class="ti"><use href="#swapsh"/></svg></button><button aria-label="面板 3"><svg class="ti"><use href="#quill"/></svg></button><button aria-label="面板 4"><svg class="ti"><use href="#nib"/></svg></button></div>
      <div class="pgroup green"><div class="grip"></div><button aria-label="面板 5"><svg class="ti"><use href="#tpath"/></svg></button><button aria-label="面板 6"><svg class="ti"><use href="#news"/></svg></button><button aria-label="面板 7"><svg class="ti"><use href="#rr"/></svg></button><button aria-label="面板 8"><svg class="ti"><use href="#plus"/></svg></button><button aria-label="面板 9"><svg class="ti"><use href="#lr"/></svg></button><button aria-label="面板 10"><svg class="ti"><use href="#cross"/></svg></button><button aria-label="面板 11"><svg class="ti"><use href="#ruler"/></svg><span class="nums"><b>1</b><b>2</b></span></button><button aria-label="面板 12"><svg class="ti"><use href="#dync"/></svg></button></div>
      <div class="pgroup pink"><div class="grip"></div><button aria-label="面板 13"><svg class="ti"><use href="#dice2"/></svg></button><button aria-label="面板 14"><svg class="ti"><use href="#sun"/></svg></button><button aria-label="面板 15"><svg class="ti"><use href="#corner"/></svg></button><button aria-label="面板 16"><svg class="ti"><use href="#bfly"/></svg></button><button aria-label="面板 17"><svg class="ti"><use href="#box3"/></svg></button><button aria-label="面板 18"><svg class="ti"><use href="#diag"/></svg></button><button aria-label="面板 19"><svg class="ti"><use href="#lens"/></svg></button><button aria-label="面板 20"><svg class="ti"><use href="#banana"/></svg></button><button aria-label="面板 21"><svg class="ti"><use href="#wnode"/></svg></button><button aria-label="面板 22"><svg class="ti"><use href="#scribe"/></svg></button><button aria-label="面板 23"><svg class="ti"><use href="#splat"/></svg></button><button aria-label="面板 24"><svg class="ti"><use href="#abig"/></svg></button><button aria-label="面板 25"><svg class="ti"><use href="#star4"/></svg></button><button aria-label="面板 26"><svg class="ti"><use href="#blobb"/></svg></button><button aria-label="面板 27"><svg class="ti"><use href="#texb"/></svg></button><button aria-label="面板 28"><svg class="ti"><use href="#tex"/></svg></button><button aria-label="面板 29"><svg class="ti"><use href="#eyeg"/></svg></button><button aria-label="面板 30"><svg class="ti"><use href="#anvil"/></svg></button><button aria-label="面板 31"><svg class="ti"><use href="#crown"/></svg></button></div>
      <div class="pgroup purple"><div class="grip"></div><button aria-label="面板 32"><svg class="ti"><use href="#four"/></svg></button><button aria-label="面板 33"><svg class="ti"><use href="#bird"/></svg></button></div>
      <div class="pgroup pink"><div class="grip"></div><button aria-label="面板 34"><svg class="ti"><use href="#nodes"/></svg></button></div>
      <div class="pgroup green"><div class="grip"></div><button aria-label="面板 35"><svg class="ti"><use href="#clock"/></svg></button></div>
    </aside>
    <main class="doc">
      <div class="doctabs"><div class="doctab"><span>未标题-1* @ 92.76 % (RGB/预览)</span><button aria-label="关闭"><svg><use href="#x"/></svg></button></div></div>
      <div class="canvas"><div class="artboard"></div></div>
    </main>
  </div>
</div>

<div class="ime" role="toolbar">
  <svg class="sogou" viewBox="0 0 48 40"><path d="M0 0h40q5 14 6 24-4 14-34 16-4 0-5-5z" fill="url(#rb)"/><path d="M36 7Q24 0 14 7q-6 8 9 9 13 1 10 9-5 9-20 3" fill="none" stroke="#fff" stroke-width="7"/></svg>
  <b>中</b><b>°,</b>
  <svg viewBox="0 0 24 24"><rect x="8" y="1" width="8" height="13" rx="4"/><path d="M4 11q1 8 8 8t8-8M12 19v4" fill="none" stroke="#0a6fd8" stroke-width="2"/></svg>
  <svg viewBox="0 0 24 24"><rect x="1" y="3" width="22" height="18" rx="3"/><path d="M4 8h16M4 12h16M7 17h10" stroke="#fff" stroke-width="2" stroke-dasharray="3 1"/></svg>
  <svg viewBox="0 0 24 24"><rect x="2" y="2" width="9" height="9" rx="3"/><rect x="2" y="13" width="9" height="9" rx="3"/><rect x="13" y="13" width="9" height="9" rx="3"/><rect x="14" y="3" width="7" height="7" rx="2" fill="none" stroke="#0a6fd8" stroke-width="2"/></svg>
</div>

<div class="taskbar">
  <span class="handle"></span>
  <button class="btn"><svg class="ti"><use href="#pencil"/></svg>绘制（铅笔）</button>
  <button class="btn"><svg class="ti"><use href="#gen"/></svg>生成矢量</button>
  <svg class="ti"><use href="#imgadd"/></svg>
  <span class="td3">•••</span>
</div>
<div class="minis">
  <div class="mini-p"><div class="mh"><span>››</span><svg><use href="#x"/></svg></div><div class="grip"></div><i class="gb"></i><svg class="ti mi"><use href="#swapsh"/></svg></div>
  <div class="mini-p"><div class="mh"><span>››</span><svg><use href="#x"/></svg></div><div class="grip"></div></div>
</div>

<div class="chrome">
  <div class="strip">
    <button class="tabsearch" aria-label="搜索标签页"><svg><use href="#chev"/></svg></button>
    <div class="tabs">
      <div class="tab"><svg class="fav"><use href="#chrome"/></svg><span>新标签页</span><button aria-label="关闭"><svg><use href="#x"/></svg></button></div>
      <div class="tab"><svg class="fav"><use href="#tiktok"/></svg><span>发现更多</span><button aria-label="关闭"><svg><use href="#x"/></svg></button></div>
      <div class="tab"><svg class="fav"><use href="#bili"/></svg><span>哔哩哔哩</span><button aria-label="关闭"><svg><use href="#x"/></svg></button></div>
      <div class="tab"><svg class="fav"><use href="#bili"/></svg><span>赊刀人-</span><button aria-label="关闭"><svg><use href="#x"/></svg></button></div>
      <div class="tab audio"><svg class="fav"><use href="#bili"/></svg><span>惊蛰</span><svg class="spk"><use href="#spk"/></svg><button aria-label="关闭"><svg><use href="#x"/></svg></button></div>
      <div class="tab"><svg class="fav paw"><use href="#baidu"/></svg><span>CoolSe</span><button aria-label="关闭"><svg><use href="#x"/></svg></button></div>
      <div class="tab"><svg class="fav"><use href="#cursor"/></svg><span>Adobe</span><button aria-label="关闭"><svg><use href="#x"/></svg></button></div>
      <div class="tab"><svg class="fav"><use href="#hua"/></svg><span>【新提醒</span><button aria-label="关闭"><svg><use href="#x"/></svg></button></div>
      <div class="tab"><svg class="fav"><use href="#hua"/></svg><span>【新提醒</span><button aria-label="关闭"><svg><use href="#x"/></svg></button></div>
      <div class="tab nosep"><svg class="fav"><use href="#hua"/></svg><span>【新提醒</span><button aria-label="关闭"><svg><use href="#x"/></svg></button></div>
      <div class="tab cur"><svg class="fav"><use href="#hua"/></svg><span>【新提醒</span><button aria-label="关闭"><svg><use href="#x"/></svg></button></div>
      <div class="tab"><svg class="fav"><use href="#hua"/></svg><span>【新提醒</span><button aria-label="关闭"><svg><use href="#x"/></svg></button></div>
      <div class="tab"><svg class="fav"><use href="#cpc"/></svg><span>CPC中文</span><button aria-label="关闭"><svg><use href="#x"/></svg></button></div>
      <div class="tab"><svg class="fav"><use href="#cpc"/></svg><span>原创 Co</span><button aria-label="关闭"><svg><use href="#x"/></svg></button></div>
      <div class="tab"><svg class="fav"><use href="#cpc"/></svg><span>原</span></div>
    </div>
  </div>
  <div class="cbar">
    <button class="dim" aria-label="后退"><svg viewBox="0 0 20 20"><path d="M19 10H2M9 2l-8 8 8 8"/></svg></button>
    <button class="dim" aria-label="前进"><svg viewBox="0 0 20 20"><path d="M1 10h17M11 2l8 8-8 8"/></svg></button>
    <button aria-label="刷新"><svg viewBox="0 0 20 20"><path d="M17 6a8 8 0 1 0 1 6M18 1v6h-6"/></svg></button>
    <button aria-label="主页"><svg viewBox="0 0 20 20"><path d="M2 8l8-7 8 7v11h-5v-7H7v7H2z"/></svg></button>
    <div class="omni"><span class="site"><svg viewBox="0 0 20 20"><circle cx="5" cy="5" r="3"/><circle cx="15" cy="15" r="3"/><path d="M11 5h8M1 15h8"/></svg></span><input value="52cnp.com/thread-19225-1-1.html" aria-label="地址"><svg class="starb" viewBox="0 0 24 24"><path d="M12 2l3 7 7 1-5 5 1 7-6-4-6 4 1-7-5-5 7-1z"/></svg></div>
    <svg class="ext" viewBox="0 0 24 24"><circle cx="12" cy="12" r="12" fill="#1a5fd8"/><circle cx="12" cy="12" r="8" fill="#e6f0ff"/><path d="M20 12q-3-5-7-4-3 4-1 7t-4 4q9 3 12-7z" fill="#3a7be0"/></svg>
    <svg class="ext" viewBox="0 0 24 24"><use href="#gtr"/></svg>
  </div>
  <div class="marks">
    <svg class="apps" viewBox="0 0 22 22"><path d="M2 2h6v6H2zM14 2h6v6h-6zM2 14h6v6H2zM14 14h6v6h-6z"/></svg>
    <nav class="bm">
      <a href="#"><svg><use href="#fontd"/></svg>字体下载-求字体网...</a>
      <a href="#"><svg><use href="#vposy"/></svg>vposy的微博_微博</a>
      <a href="#"><svg><use href="#weibo"/></svg>@fali-xx 的个人主...</a>
      <a href="#"><i class="sq zhi">知</i>首页 - 知乎</a>
      <a href="#"><svg><use href="#google"/></svg>Google</a>
      <a href="#"><svg><use href="#baidu"/></svg>百度一下，你就知道</a>
      <a href="#"><svg><use href="#bfold"/></svg>自行车</a>
      <a href="#"><svg><use href="#bfold"/></svg>电动车厂家</a>
      <a href="#"><svg><use href="#bfold"/></svg>平面素材网站</a>
      <a href="#"><svg><use href="#bfold"/></svg>设计网站</a>
      <a href="#"><svg><use href="#gtr"/></svg>Google 翻译</a>
      <a href="#"><i class="sq yi">译</i>百度翻译-您的超级...</a>
      <a href="#"><svg><use href="#globe"/></svg>ADSL测速</a>
      <a href="#"><svg><use href="#bili"/></svg>哔哩哔</a>
    </nav>
  </div>
  <div class="page">
    <div class="red">
      <div class="sitelogo"><svg><use href="#horn"/></svg><span>華印社區</span></div>
      <nav class="sitenav"><a href="#">每日签到</a><a href="#">门户</a><a href="#" class="cur">版块</a><a href="#">导读</a><a href="#" class="yel">获取印币</a><a href="#">平面</a><a href="#">印前</a><a href="#">流程</a><a href="#">更多</a></nav>
      <a href="#" class="quick"><svg viewBox="0 0 24 20"><path d="M0 3h4M7 3h17M0 10h4M7 10h17M0 17h4M7 17h17"/></svg>快捷导航</a>
      <div class="sitesearch"><i class="floor">16<sup>#</sup></i><span>帖子</span><input placeholder="请输入搜索内容" aria-label="搜索"><svg viewBox="0 0 24 24"><circle cx="11" cy="10" r="8"/><path d="M16 16l6 6"/></svg></div>
      <div class="ghost"><i></i>发表于 1 秒前<b></b>只看该作者</div>
    </div>
    <div class="wm"><svg><use href="#horn"/></svg><div><b>華印社區</b><small>www.52cnp.com</small></div></div>
  </div>
</div>

<div class="explorer">
  <div class="etitle">
    <div class="etab"><svg class="ef"><use href="#fold"/></svg><span>Plug-ins</span><button aria-label="关闭标签页"><svg><use href="#x"/></svg></button></div>
    <button class="newtab" aria-label="新标签页"><svg viewBox="0 0 14 14"><path d="M7 0v14M0 7h14"/></svg></button>
    <div class="wc"><button aria-label="最小化"><svg viewBox="0 0 16 16"><path d="M0 8h16"/></svg></button><button aria-label="最大化"><svg viewBox="0 0 16 16"><rect x="1" y="1" width="14" height="14" rx="1"/></svg></button><button aria-label="关闭"><svg viewBox="0 0 16 16"><path d="M1 1l14 14M15 1L1 15"/></svg></button></div>
  </div>
  <div class="enav">
    <button aria-label="后退"><svg viewBox="0 0 20 20"><path d="M19 10H1M9 2l-8 8 8 8"/></svg></button>
    <button class="dim" aria-label="前进"><svg viewBox="0 0 20 20"><path d="M1 10h18M11 2l8 8-8 8"/></svg></button>
    <button aria-label="向上"><svg viewBox="0 0 20 20"><path d="M10 19V1M2 9l8-8 8 8"/></svg></button>
    <button aria-label="刷新"><svg viewBox="0 0 20 20"><path d="M16 4a8 8 0 1 0 2 6M17 1v5h-5"/></svg></button>
    <nav class="crumbs"><svg class="mon" viewBox="0 0 24 24"><path d="M3 2h18v16H3zM9 18v4M15 18v4M6 22h12"/></svg><i></i><a href="#" class="cjk">此电脑</a><i></i><a href="#">WIN11 (C:)</a><i></i><a href="#">Program Files</a><i></i><a href="#">Adobe</a><i></i><a href="#">Adobe Illustrator 2025</a><i></i><a href="#">Plug-ins</a><i></i></nav>
    <div class="esearch"><input placeholder="在 Plug-ins 中搜索" aria-label="搜索"><svg viewBox="0 0 18 18"><circle cx="7" cy="7" r="6"/><path d="M11 11l6 6"/></svg></div>
  </div>
  <div class="ebar">
    <button class="new"><svg viewBox="0 0 24 24"><circle cx="12" cy="12" r="11"/><path d="M12 7v10M7 12h10" class="b"/></svg>新建<svg class="c10"><use href="#chev"/></svg></button>
    <div class="eicons">
      <button aria-label="剪切"><svg viewBox="0 0 24 24"><path d="M7 1l8 15M17 1L9 16"/><circle cx="6" cy="19" r="4" class="b"/><circle cx="18" cy="19" r="4" class="b"/></svg></button>
      <button aria-label="复制"><svg viewBox="0 0 24 24"><path d="M6 6q-4 0-4 4v9q0 4 4 4h7q3 0 4-3"/><rect x="9" y="1" width="13" height="17" rx="3" class="b"/></svg></button>
      <button aria-label="粘贴"><svg viewBox="0 0 24 24"><path d="M8 3H4q-2 0-2 2v16q0 2 2 2h6M16 3h3q2 0 2 2v1M8 1h8v4H8z"/><rect x="11" y="8" width="11" height="15" rx="2" class="b"/></svg></button>
      <button aria-label="重命名"><svg viewBox="0 0 24 24"><path d="M13 3H4Q1 3 1 6v11q0 3 3 3h9M18 3h2q3 0 3 3v11q0 3-3 3h-2"/><path d="M4 16l4-9 4 9M6 13h5M16 0v23M13 0h6M13 23h6" class="b"/></svg></button>
      <button aria-label="共享"><svg viewBox="0 0 24 24"><path d="M8 4H5Q2 4 2 7v12q0 3 3 3h12q3 0 3-3v-2"/><path d="M7 16q1-8 8-9V2l8 7-8 7v-4q-5 0-8 4z" class="b"/></svg></button>
      <button aria-label="删除"><svg viewBox="0 0 24 24"><path d="M1 5h22M9 5V1h6v4M4 5l2 18h12l2-18M10 9v9M14 9v9"/></svg></button>
    </div>
    <button class="sort"><svg viewBox="0 0 24 24"><path d="M7 21V3M1 9l6-7 6 7"/><path d="M17 3v19M11 15l6 7 6-7" class="b"/></svg>排序<svg class="c10"><use href="#chev"/></svg></button>
    <button class="view"><svg viewBox="0 0 24 24"><path d="M0 5h10M0 10h10M0 15h10M0 20h10M14 5h10M14 10h10M14 15h10M14 20h10"/></svg>查看<svg class="c10"><use href="#chev"/></svg></button>
    <button class="emore" aria-label="更多">•••</button>
    <button class="detail"><svg viewBox="0 0 24 20"><rect x="1" y="2" width="22" height="16" rx="3"/><path d="M14 2h6q3 0 3 3v10q0 3-3 3h-6zM17 7h4M17 10h4M17 13h4" class="b"/></svg>详细信息</button>
  </div>
  <div class="ebody">
    <nav class="side">
      <a href="#"><svg><use href="#home"/></svg>主文件夹</a>
      <a href="#"><svg><use href="#pics"/></svg>图库</a>
      <hr>
      <a href="#"><svg><use href="#desk"/></svg>桌面<svg class="pin"><use href="#pin"/></svg></a>
      <a href="#"><svg><use href="#zip"/></svg>k客户<svg class="pin"><use href="#pin"/></svg></a>
      <a href="#"><svg><use href="#zip"/></svg>K客户发图<svg class="pin"><use href="#pin"/></svg></a>
      <a href="#"><svg><use href="#fold"/></svg>菲林高总<svg class="pin"><use href="#pin"/></svg></a>
      <a href="#"><svg><use href="#fold"/></svg>X星凡激光刀<svg class="pin"><use href="#pin"/></svg></a>
      <a href="#"><svg><use href="#fold"/></svg>Plug-ins</a>
      <a href="#"><svg viewBox="0 0 24 24"><use href="#fold" width="24" height="20" y="1"/><circle cx="5" cy="19" r="5" fill="#12cfa5"/><path d="M3 19l2 2 3-4" fill="none" stroke="#fff"/></svg>2025</a>
      <hr>
      <a href="#"><svg><use href="#pan"/></svg>百度网盘同步空间</a>
      <a href="#"><svg><use href="#pc"/></svg>此电脑</a>
      <a href="#" class="sub on"><svg><use href="#diskw"/></svg>WIN11 (C:)</a>
      <a href="#" class="sub"><svg><use href="#disk"/></svg>本地磁盘 (D:)</a>
      <a href="#" class="sub"><svg><use href="#diske"/></svg>本地磁盘 (E:)</a>
      <a href="#" class="sub"><svg><use href="#diske"/></svg>本地磁盘 (F:)</a>
      <a href="#"><svg><use href="#net"/></svg>网络</a>
    </nav>
    <ul class="files">
      <li><svg><use href="#fold"/></svg>CoolSelection2023</li><li><svg><use href="#fold"/></svg>Extensions</li><li><svg><use href="#fold"/></svg>FILTERiT5.6.5_AI2021-2022</li><li><svg><use href="#fold"/></svg>Illustrator Filters</li><li><svg><use href="#fold"/></svg>Illustrator Formats</li><li><svg><use href="#fold"/></svg>Illustrator UI</li><li><svg><use href="#fold"/></svg>Photoshop Filters</li><li><svg><use href="#fold"/></svg>Photoshop Formats</li><li><svg><use href="#fold"/></svg>Text Filters</li><li><svg><use href="#fold"/></svg>Tools</li>
      <li><svg><use href="#plug"/></svg>AGCore</li><li><svg><use href="#plug"/></svg>AstuteBuddy</li><li><svg><use href="#plug"/></svg>Autosaviour</li><li><svg><use href="#plug"/></svg>ColliderScribe</li><li><svg><use href="#plug"/></svg>DebugPanel</li><li><svg><use href="#plug"/></svg>DirectPrefs</li><li><svg><use href="#plug"/></svg>DynamicSketch</li><li><svg><use href="#plug"/></svg>FindReplace</li><li><svg><use href="#plug"/></svg>InkFlow</li><li><svg><use href="#plug"/></svg>InkQuest</li><li><svg><use href="#plug"/></svg>InkScribe</li><li><svg><use href="#plug"/></svg>MirrorMe</li><li><svg><use href="#plug"/></svg>Phantasm</li><li><svg><use href="#plug"/></svg>Randomino</li><li><svg><use href="#plug"/></svg>Rasterino</li><li><svg><use href="#plug"/></svg>Reform</li><li><svg><use href="#plug"/></svg>Stipplism</li><li><svg><use href="#plug"/></svg>Stylism</li><li><svg><use href="#plug"/></svg>SubScribe</li><li><svg><use href="#plug"/></svg>Texturino</li><li><svg><use href="#plug"/></svg>VectorFirstAid</li><li><svg><use href="#plug"/></svg>VectorScribe</li><li><svg><use href="#plug"/></svg>WidthScribe</li>
    </ul>
  </div>
  <div class="estat"><span>33 个项目</span><svg viewBox="0 0 20 20"><path d="M1 3h18M1 8h18M1 13h18M1 18h18"/></svg><svg viewBox="0 0 20 20"><rect x="1" y="1" width="18" height="14" rx="1"/><path d="M1 18h18"/></svg></div>
</div>
</body>
</html>
```

FILE: styles.css
```css
* { box-sizing: border-box; }
html, body { margin: 0; height: 100%; }
body {
  position: relative;
  overflow: hidden;
  background: #535353;
  font: 18px/24px "Noto Sans", "Noto Sans CJK SC", sans-serif;
  color: #e8e8e8;
}
a { color: inherit; text-decoration: none; }
button, input, select { font: inherit; color: inherit; border: 0; background: none; padding: 0; margin: 0; }
button { display: inline-flex; align-items: center; justify-content: center; }
input { min-width: 0; outline: 0; }
svg { display: block; flex: none; }
.defs { position: absolute; width: 0; height: 0; }

/* shared icon styles */
.ti { width: 32px; height: 32px; fill: none; stroke: currentColor; stroke-width: 2; color: #c5c5c5; }
.f { fill: currentColor; stroke: none; }
.grip { height: 5px; width: 28px; background: repeating-linear-gradient(90deg, #333 0 1px, transparent 1px 3px); }

/* Illustrator */
.ai { display: flex; flex-direction: column; height: 100%; }
.menubar { display: flex; align-items: center; flex: none; height: 42px; padding: 0 18px 10px; border-bottom: 2px solid #444; }
.ailogo { width: 24px; height: 24px; border-radius: 4px; background: #330000; color: #ff9a00; font: 700 14px/24px "Noto Sans", sans-serif; text-align: center; }
.homeic { width: 28px; height: 24px; margin-left: 21px; fill: #c5c5c5; }
.menus { display: flex; gap: 25px; margin-left: 20px; padding: 0 17px 0 22px; height: 30px; align-items: center; border-left: 2px solid #5e5e5e; border-right: 2px solid #5e5e5e; }
.control { display: flex; align-items: center; flex: none; height: 52px; padding: 0 0 2px 11px; border-bottom: 2px solid #2f2f2f; }
.grip-v { width: 2px; height: 28px; background: repeating-linear-gradient(#333 0 1px, transparent 1px 3px); }
.nosel { width: 150px; height: 38px; line-height: 36px; padding-left: 14px; border-right: 2px solid #484848; color: #b9b9b9; }
.combo { display: flex; position: relative; height: 30px; margin-left: 8px; border: 1px solid #666; border-radius: 3px; background: #454545; }
.sw { width: 28px; }
.white { background: #fff; }
.pale { background: #e4e4e4; }
.ring { background: #000; border: 1px solid #eee; }
.ring::after { content: ""; width: 11px; height: 11px; border: 2px solid #fff; background: #999; }
.dd { display: flex; width: 28px; align-items: center; justify-content: center; border-left: 1px solid #5c5c5c; }
.dd svg, .c12 { width: 12px; height: 12px; fill: none; stroke: #fff; stroke-width: 2; }
.turn svg { transform: rotate(-90deg); }
.spin { width: 28px; border-right: 1px solid #5c5c5c; }
.spin svg { width: 12px; height: 24px; fill: none; stroke: #fff; stroke-width: 2; }
.dotted { margin-left: 18px; border-bottom: 2px dotted #c5c5c5; line-height: 22px; width: 50px; white-space: nowrap; }
.dotted.wide { width: 86px; margin-left: 12px; }
.num { padding-left: 5px; font-size: 16px; }
.w-pt { width: 62px; }
.w-op { width: 75px; }
.pick { background: #454545; }
.pick select { appearance: none; background: #e4e4e4; color: #222; }
.s-prof { width: 133px; padding-left: 92px; }
.s-brush { width: 129px; padding-left: 36px; }
.strokeline { position: absolute; left: 10px; top: 12px; width: 74px; height: 4px; background: #000; }
.dot { position: absolute; left: 12px; top: 12px; width: 5px; height: 5px; border-radius: 50%; background: #000; }
.style-l { margin-left: 8px; width: 50px; color: #b9b9b9; white-space: nowrap; }
.vline { width: 2px; height: 38px; margin: 0 8px; background: #484848; }
.control .btn { width: 103px; margin-right: 6px; }
.btn { height: 30px; border: 2px solid #6e6e6e; border-radius: 4px; }
.plain { gap: 4px; margin-left: 4px; }
.control .gen { margin-left: 12px; }
.work { display: flex; flex: 1; min-height: 0; }
.phead { width: 100%; height: 17px; background: #424242; color: #d0d0d0; font: 700 20px/12px "Noto Sans", sans-serif; padding-left: 8px; border-bottom: 1px solid #383838; }
.tools { position: relative; width: 109px; margin-left: 3px; border-left: 1px solid #444; }
.tools > .grip { margin: 6px auto 19px 38px; }
.toolgrid { display: grid; grid-template-columns: 45px 45px; grid-auto-rows: 36px; padding-left: 9px; }
.tool { position: relative; }
.tool.on { background: linear-gradient(#2b2b2b, #2b2b2b) 2px 1px / 41px 33px no-repeat; }
.more::after { content: ""; position: absolute; right: 3px; bottom: 4px; border: 3px solid transparent; border-right-color: #c5c5c5; border-bottom-color: #c5c5c5; }
/* figures printed on the ruler icon */
.nums { position: absolute; left: 0; right: 0; bottom: 7px; display: flex; justify-content: center; gap: 7px; color: #ddd; font: 10px/10px "Noto Sans", sans-serif; }
.nums b { font-weight: 400; }
.colors { width: 96px; height: 86px; margin: 10px 0 0 11px; }
.modes { display: grid; grid-template-columns: repeat(3, 30px); margin: 4px 0 0 7px; width: 91px; height: 31px; border: 1px solid #626262; overflow: hidden; }
.modes button + button { border-left: 1px solid #626262; }
.modes .on { background: #2b2b2b; }
.modes.low { margin-top: 6px; height: 28px; }
.chip { width: 20px; height: 20px; border: 2px solid #000; background: #fff; }
.chip.g { background: linear-gradient(90deg, #fff, #433); }
.chip.n { background: linear-gradient(to bottom right, #fff 42%, #f00 42% 58%, #fff 58%); }
.drawm { position: relative; width: 13px; height: 13px; border: 2px solid #c5c5c5; border-radius: 50%; background: #777; }
.drawm::after { content: ""; position: absolute; left: 5px; top: 5px; width: 9px; height: 9px; background: #c5c5c5; }
.drawm.off { opacity: .25; }
.screen { width: 34px; height: 24px; margin: 14px 0 0 37px; }
.tdots { margin: 24px 0 0 41px; font: 24px/24px "Liberation Sans", sans-serif; color: #c5c5c5; }
.mark { position: absolute; left: 9px; top: 29px; width: 98px; height: 1223px; border: 2px solid #ee141c; }
.plugs { width: 60px; border-left: 2px solid #414141; border-right: 1px solid #414141; }
.pgroup { padding-top: 6px; border-bottom: 2px solid #414141; }
.pgroup > .grip { margin: 0 0 6px 13px; }
.pgroup button { position: relative; display: flex; flex-direction: column; justify-content: flex-start; width: 100%; height: 42px; }
.pgroup button:last-child { height: 43px; }
.pgroup button::before { content: ""; width: 33px; height: 3px; margin: 2px 0 0; background: linear-gradient(90deg, var(--a) 6px, var(--b) 6px); }
.pgroup .ti { width: 30px; height: 30px; }
.pgroup .nums { bottom: 13px; }
.blue { --a: #10b4ff; --b: #2a7fa6; }
.green { --a: #74c20a; --b: #5f8a2c; }
.pink { --a: #f0197c; --b: #a13566; }
.purple { --a: #b548ff; --b: #8450ad; }
.doc { flex: 1; display: flex; flex-direction: column; min-width: 0; border-left: 2px solid #2a2a2a; }
.doctabs { height: 44px; flex: none; background: #424242; border-bottom: 2px solid #555; }
.doctab { display: flex; align-items: center; justify-content: space-between; width: 343px; height: 40px; padding: 0 10px 0 15px; background: #535353; font-size: 19px; }
.doctab svg { width: 11px; height: 11px; stroke: #ddd; stroke-width: 2; }
.canvas { flex: 1; background: #606060; }
.artboard { width: 1045px; height: 1521px; background: #fff; border-right: 2px solid #111; border-bottom: 2px solid #222; }

/* floating tool bars */
.ime { position: absolute; left: 1845px; top: 0; display: flex; align-items: center; gap: 12px; height: 39px; padding-right: 8px; background: #fff; border: 1px solid #b8cdea; border-top: 0; border-left: 0; color: #0a6fd8; }
.ime svg { width: 24px; height: 24px; fill: #0a6fd8; }
.ime .sogou { width: 48px; height: 40px; margin-right: -5px; }
.ime b { width: 24px; font-size: 22px; text-align: center; }
.taskbar { position: absolute; left: 2095px; top: 187px; display: flex; align-items: center; gap: 7px; width: 453px; height: 52px; padding: 2px 8px 0; background: #535353; border: 2px solid #444; border-radius: 8px; }
.handle { width: 6px; height: 41px; border-radius: 3px; background: #b0b0b0; margin-right: 8px; }
.taskbar .btn { height: 42px; gap: 8px; padding: 0 8px 0 2px; white-space: nowrap; }
.taskbar .btn .ti { width: 28px; height: 28px; }
.taskbar .btn:nth-of-type(1) { width: 175px; }
.taskbar .btn:nth-of-type(2) { width: 138px; }
.td3 { font: 22px/24px "Liberation Sans", sans-serif; color: #c5c5c5; margin-left: 12px; }
.minis { position: absolute; left: 2786px; right: 0; top: 181px; display: flex; gap: 2px; overflow: hidden; }
.mini-p { flex: none; width: 58px; height: 60px; background: #535353; border: 1px solid #3c3c3c; border-radius: 6px 6px 0 0; }
.mh { display: flex; align-items: center; justify-content: space-between; height: 18px; padding: 0 9px; background: #424242; border-bottom: 1px solid #333; font: 700 20px/12px "Noto Sans", sans-serif; color: #d0d0d0; }
.mh span { padding-bottom: 6px; }
.mh svg { width: 10px; height: 10px; stroke: #d0d0d0; stroke-width: 2; }
.mini-p .grip { margin: 6px 14px 8px; }
.gb { display: block; margin-left: 12px; width: 34px; height: 3px; background: linear-gradient(90deg, #74c20a 6px, #5f8a2c 6px); }
.mi { margin-left: 12px; }

/* Chrome */
.chrome { position: absolute; left: 440px; top: 236px; right: 0; bottom: 0; display: flex; flex-direction: column; overflow: hidden; background: #fff; border: 1px solid #b9bcc0; border-right: 0; border-bottom: 0; border-radius: 14px 0 0; color: #474747; }
.strip { display: flex; flex: none; height: 58px; padding: 7px 0 0 9px; background: #dee2ea; }
.tabsearch { flex: none; width: 42px; height: 42px; border-radius: 14px; background: #fff; }
.tabsearch svg { width: 12px; height: 12px; fill: none; stroke: #222; stroke-width: 2; }
.tabs { display: grid; grid-template-columns: repeat(8, 166px 167px); margin-left: 10px; }
.tab { position: relative; display: flex; align-items: flex-start; height: 51px; padding: 9px 0 0 12px; }
.fav { width: 24px; height: 24px; margin-right: 10px; }
.paw { background: #fff; border-radius: 3px; }
.tab span { flex: none; width: 61px; overflow: hidden; white-space: nowrap; -webkit-mask: linear-gradient(90deg, #000 40px, transparent 66px); mask: linear-gradient(90deg, #000 40px, transparent 66px); }
.tab.audio span { width: 30px; -webkit-mask: linear-gradient(90deg, #000 16px, transparent 34px); mask: linear-gradient(90deg, #000 16px, transparent 34px); }
.spk { width: 18px; height: 18px; margin: 3px 4px 0 9px; }
.tab button { margin: 6px 0 0 20px; }
.tab button svg { width: 12px; height: 12px; stroke: #3c3f43; stroke-width: 2; }
.tab::after { content: ""; position: absolute; right: 4px; top: 9px; width: 2px; height: 24px; background: #c2c4c8; }
.tab.nosep::after, .tab.cur::after { display: none; }
.tab.cur { background: #fff; border-radius: 14px 14px 0 0; margin-right: 9px; color: #1f1f1f; }
.cbar { display: flex; align-items: center; flex: none; height: 70px; padding-left: 6px; background: #fff; overflow: hidden; }
.cbar > button { flex: none; width: 54px; }
.cbar > button svg { width: 20px; height: 20px; fill: none; stroke: #474747; stroke-width: 2; }
.cbar > .dim svg { stroke: #a0a3a6; }
.omni { display: flex; align-items: center; flex: 1; height: 51px; margin-left: 12px; padding: 0 23px 0 4px; border-radius: 26px; background: #edf1fa; }
.omni input { flex: 1; margin-left: 9px; padding-bottom: 2px; font-size: 22px; color: #2d2f32; }
.site { display: flex; width: 42px; height: 38px; border-radius: 20px; background: #fff; align-items: center; justify-content: center; }
.site svg { width: 20px; height: 20px; fill: none; stroke: #222; stroke-width: 2; }
.starb { width: 25px; height: 25px; fill: none; stroke: #444; stroke-width: 2; }
.ext { width: 24px; height: 24px; margin-left: 28px; }
.ext + .ext { margin: 0 -12px 0 30px; }
.marks { display: flex; align-items: center; flex: none; height: 52px; padding: 0 0 8px 28px; border-bottom: 2px solid #e3e5e8; }
.apps { width: 22px; height: 22px; fill: none; stroke: #444; stroke-width: 3; }
.bm { display: grid; grid-template-columns: 231px 206px 231px 149px 119px 222px 117px 153px 171px 132px 162px 231px 140px 120px; align-items: center; margin-left: 22px; padding-left: 21px; border-left: 3px solid #d3e0f8; height: 24px; }
.bm a { display: flex; align-items: center; gap: 10px; white-space: nowrap; }
.bm svg { width: 24px; height: 24px; }
.sq { width: 24px; height: 24px; border-radius: 4px; background: #0a6cff; color: #fff; font-style: normal; font-weight: 700; text-align: center; }
.yi { background: #1684fc; }
.page { position: relative; flex: 1; background: #f4f4f4; }
.red { position: relative; display: flex; align-items: center; height: 90px; background: #e03b3b; color: #fff; font-size: 24px; }
.sitelogo { display: flex; align-items: flex-start; align-self: flex-start; gap: 6px; width: 266px; margin-left: 536px; padding-top: 10px; }
.sitelogo svg { width: 72px; height: 60px; }
.sitelogo span { font: 700 40px/48px "Noto Sans CJK TC", sans-serif; color: #ff9c1a; -webkit-text-stroke: 4px #fff2dd; paint-order: stroke fill; white-space: nowrap; }
.sitenav { display: flex; align-self: stretch; }
.sitenav a { padding: 0 27px; line-height: 90px; }
.sitenav .cur { background: #cc2121; }
.sitenav .yel { color: #fff700; font-weight: 700; }
.quick { display: flex; align-items: center; gap: 9px; margin-left: 44px; }
.quick svg { width: 24px; height: 20px; stroke: #fff; stroke-width: 3; }
.sitesearch { position: relative; display: flex; align-items: center; width: 313px; height: 60px; margin-left: 28px; padding: 0 20px 0 13px; background: #cc2121; }
.sitesearch span { font-size: 20px; }
.sitesearch input { flex: 1; margin-left: 50px; font-size: 21px; }
.sitesearch input::placeholder { color: #f0a0a0; opacity: 1; }
.sitesearch svg { width: 24px; height: 24px; fill: none; stroke: #ffe2cf; stroke-width: 3; }
/* faded leftovers of the post header behind the site bar */
.floor { position: absolute; right: 44px; top: -8px; width: 39px; height: 39px; border-radius: 20px; background: rgba(150, 0, 0, .2); color: #d63a3a; font: 16px/44px "Noto Sans", sans-serif; text-align: center; }
.floor sup { font-size: 11px; line-height: 0; }
.ghost { position: absolute; left: 860px; top: 16px; display: flex; align-items: center; gap: 8px; font-size: 18px; color: #d03333; white-space: nowrap; }
.ghost i { width: 20px; height: 22px; border-radius: 3px; background: #dc3a20; }
.ghost b { width: 1px; height: 18px; margin: 0 7px; background: #d03333; }
.wm { position: absolute; right: 2px; bottom: 0; display: flex; align-items: center; gap: 6px; }
.wm svg { width: 36px; height: 30px; }
.wm b { display: block; font: 700 21px/22px "Noto Sans CJK TC", sans-serif; color: #fff6e6; -webkit-text-stroke: 2px #f9b45c; paint-order: stroke fill; }
.wm small { display: block; font: 700 11px/12px "Noto Sans", sans-serif; color: #8d8d8d; }

/* File Explorer */
.explorer { position: absolute; left: 857px; top: 456px; right: 22px; bottom: 43px; display: flex; flex-direction: column; overflow: hidden; background: #fff; border: 2px solid #b5b9bd; border-top-color: #9a8f98; border-radius: 14px; color: #111; }
.explorer svg { fill: none; }
.etitle { display: flex; flex: none; height: 57px; padding: 9px 0 0 11px; background: #cddcea; border-bottom: 1px solid #c0cfdf; }
.etab { display: flex; align-items: center; width: 360px; height: 48px; padding: 0 25px 0 13px; border-radius: 12px 12px 0 0; background: #eff4f9; font-weight: 600; }
.ef { width: 24px; height: 20px; margin-right: 16px; }
.etab span { flex: 1; }
.etab button svg { width: 13px; height: 13px; stroke: #222; }
.newtab { width: 68px; height: 48px; }
.newtab svg { width: 14px; height: 14px; stroke: #222; }
.wc { display: flex; height: 21px; margin-left: auto; }
.wc button { width: 70px; }
.wc svg { width: 16px; height: 16px; stroke: #111; }
.enav { display: flex; align-items: center; flex: none; height: 74px; padding: 0 14px 0 4px; background: #eff4f9; border-bottom: 2px solid #bccbdb; }
.enav > button { flex: none; width: 72px; }
.enav > button svg { width: 19px; height: 19px; stroke: #222; stroke-width: 1.500; }
.enav > .dim svg { stroke: #aaa; }
.crumbs { display: flex; align-items: center; flex: 1; height: 49px; margin-left: 9px; padding: 2px 0 0 20px; border-radius: 6px; background: #fafcfe; font-size: 20px; white-space: nowrap; }
.crumbs .cjk { font-size: 21px; }
.mon { width: 24px; height: 24px; stroke: #555; stroke-width: 2; }
.crumbs i { width: 9px; height: 9px; margin: 0 31px 0 22px; border: solid #222; border-width: 1px 1px 0 0; transform: rotate(45deg); }
.crumbs .mon + i { margin-left: 25px; }
.esearch { display: flex; align-items: center; width: 487px; height: 49px; margin-left: 13px; padding: 2px 20px 0 22px; border-radius: 6px; background: #fafcfe; }
.esearch input { flex: 1; font-size: 20px; }
.esearch input::placeholder { color: #5f6368; opacity: 1; }
.esearch svg { width: 17px; height: 17px; stroke: #222; }
.ebar { display: flex; align-items: center; flex: none; height: 70px; padding: 2px 32px 0 26px; border-bottom: 2px solid #bccbdb; }
.ebar svg { width: 24px; height: 24px; stroke: #555; stroke-width: 1.500; }
.ebar .b { stroke: #0078d4; }
.ebar > button { gap: 11px; }
.ebar .c10 { width: 10px; height: 10px; margin-left: 1px; stroke-width: 1; }
.new { width: 118px; height: 48px; justify-content: flex-start; border-right: 2px solid #e8e8e8; }
.eicons { display: flex; height: 48px; padding: 0 3px; border-right: 2px solid #e8e8e8; opacity: .35; }
.eicons button { width: 72px; }
.sort { margin-left: 24px; }
.view { height: 48px; margin-left: 41px; padding-right: 24px; border-right: 2px solid #e8e8e8; }
.emore { width: 68px; font: 20px/24px "Liberation Sans", sans-serif; }
.detail { margin-left: auto; }
.ebody { display: flex; flex: 1; min-height: 0; }
.side { width: 237px; padding: 7px 2px 0; border-right: 2px solid #f0f0f0; }
.side a { display: flex; align-items: center; gap: 5px; height: 36px; padding-left: 36px; color: #000; white-space: nowrap; }
.side svg { width: 24px; height: 24px; }
.side .pin { width: 18px; height: 20px; margin: 0 4px 0 auto; }
.side .sub { padding-left: 48px; border-radius: 3px; }
.side .on { background: #d9d9d9; }
.side hr { height: 2px; margin: 16px 11px 18px; border: 0; background: #d4d4d4; }
.files { display: grid; grid-auto-flow: column; grid-template-rows: repeat(31, 32px); grid-template-columns: 333px; grid-auto-columns: 333px; margin: 0; padding: 8px 0 0 72px; list-style: none; color: #000; }
.files li { display: flex; align-items: center; gap: 4px; white-space: nowrap; }
.files svg { width: 22px; height: 24px; }
.estat { display: flex; align-items: center; flex: none; height: 39px; padding: 0 15px 2px 21px; color: #24395c; gap: 18px; }
.estat span { margin-right: auto; padding-right: 17px; border-right: 2px solid #eee; line-height: 20px; }
.estat svg { width: 20px; height: 20px; stroke: #555; }
```
